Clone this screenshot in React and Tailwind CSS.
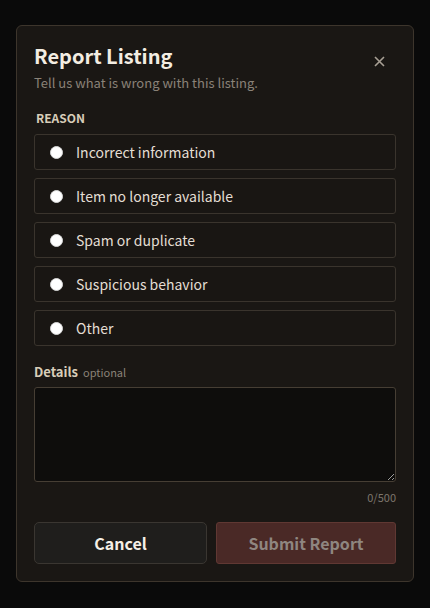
import { useState } from "react";

const reasons = [
  "Incorrect information",
  "Item no longer available",
  "Spam or duplicate",
  "Suspicious behavior",
  "Other",
];

function App() {
  const [reason, setReason] = useState(null);
  const [details, setDetails] = useState("");

  return (
    <div
      className="min-h-[608px] w-full bg-[#0a0a0a] pt-[25px] pl-[16px]"
      style={{ fontFamily: '"Noto Sans CJK KR", "Noto Sans", sans-serif' }}
    >
      <div className="w-[398px] rounded-[6px] border border-[#3d352c] bg-[#1a1714] px-[17px] pt-[17px] pb-[17px]">
        <div className="flex items-start justify-between">
          <div>
            <h2 className="text-[20px] leading-[26px] font-bold text-[#f3ede2]">Report Listing</h2>
            <p className="mt-[5px] text-[13px] leading-[18px] text-[#8a8278]">
              Tell us what is wrong with this listing.
            </p>
          </div>
          <button className="mt-[13px] mr-[11px] text-[#a8a095]">
            <svg width="11" height="11" viewBox="0 0 11 11" fill="none">
              <path d="M1 1L10 10M10 1L1 10" stroke="currentColor" strokeWidth="1.6" />
            </svg>
          </button>
        </div>

        <div className="mt-[18px] pl-[2px] text-[12px] leading-[16px] font-bold text-[#d8cdb9]">REASON</div>

        <div className="mt-[8px] flex flex-col gap-[8px]">
          {reasons.map((r) => (
            <label
              key={r}
              onClick={() => setReason(r)}
              className="flex h-[36px] cursor-pointer items-center gap-[13px] rounded-[3px] border border-[#3a342d] bg-[#191613] pl-[15px]"
            >
              <span
                className={
                  reason === r
                    ? "h-[13px] w-[13px] shrink-0 rounded-full border-[4px] border-white bg-[#c0392b]"
                    : "h-[13px] w-[13px] shrink-0 rounded-full border border-[#d8d8d8] bg-white"
                }
              />
              <span className="text-[14px] text-[#e4ded4]">{r}</span>
            </label>
          ))}
        </div>

        <div className="mt-[17px] flex items-baseline gap-[5px]">
          <span className="text-[13px] leading-[18px] font-bold text-[#d8cdb9]">Details</span>
          <span className="text-[11px] text-[#8a8278]">optional</span>
        </div>

        <textarea
          value={details}
          maxLength={500}
          onChange={(e) => setDetails(e.target.value)}
          className="mt-[6px] block h-[95px] w-full rounded-[3px] border border-[#463e34] bg-[#0e0d0c] p-2 text-[13px] text-[#e8e2d8] outline-none"
        />
        <div className="mt-[8px] text-right text-[11px] leading-[14px] text-[#7d766d]">{details.length}/500</div>

        <div className="mt-[18px] flex gap-[9px]">
          <button className="h-[42px] w-[173px] rounded-[5px] border border-[#3a3631] bg-[#1f1e1c] text-[16px] font-bold text-[#f5efe6]">
            Cancel
          </button>
          <button
            disabled={!reason}
            className="h-[42px] flex-1 rounded-[3px] border border-[#603833] bg-[#4a2926] text-[16px] font-bold text-[#8f8680]"
          >
            Submit Report
          </button>
        </div>
      </div>
    </div>
  );
}

export default App;
